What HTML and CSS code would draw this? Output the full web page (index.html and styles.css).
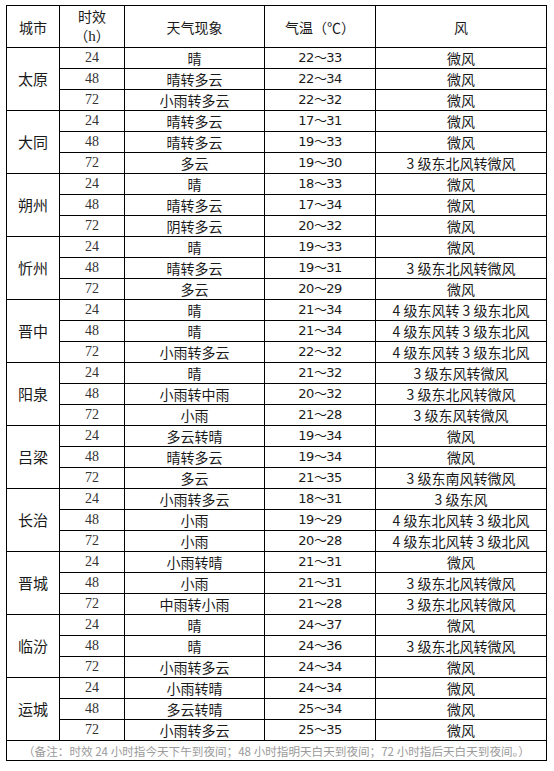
FILE: index.html
```html
<!DOCTYPE html>
<html lang="zh-CN">
<head>
<meta charset="utf-8">
<link rel="stylesheet" href="styles.css">
</head>
<body>
<table class="wx">
<colgroup>
<col class="c-city"><col class="c-h"><col class="c-sky"><col class="c-t"><col class="c-wind">
</colgroup>
<thead>
<tr class="head"><th>城市</th><th class="two">时效<br>（<span class="hh">h</span>）</th><th>天气现象</th><th>气温（℃）</th><th>风</th></tr>
</thead>
<tbody>
<tr><td rowspan="3" class="city">太原</td><td class="n">24</td><td>晴</td><td class="t">22～33</td><td>微风</td></tr>
<tr><td class="n">48</td><td>晴转多云</td><td class="t">22～34</td><td>微风</td></tr>
<tr><td class="n">72</td><td>小雨转多云</td><td class="t">22～32</td><td>微风</td></tr>

<tr><td rowspan="3" class="city">大同</td><td class="n">24</td><td>晴转多云</td><td class="t">17～31</td><td>微风</td></tr>
<tr><td class="n">48</td><td>晴转多云</td><td class="t">19～33</td><td>微风</td></tr>
<tr><td class="n">72</td><td>多云</td><td class="t">19～30</td><td>3 级东北风转微风</td></tr>

<tr><td rowspan="3" class="city">朔州</td><td class="n">24</td><td>晴</td><td class="t">18～33</td><td>微风</td></tr>
<tr><td class="n">48</td><td>晴转多云</td><td class="t">17～34</td><td>微风</td></tr>
<tr><td class="n">72</td><td>阴转多云</td><td class="t">20～32</td><td>微风</td></tr>

<tr><td rowspan="3" class="city">忻州</td><td class="n">24</td><td>晴</td><td class="t">19～33</td><td>微风</td></tr>
<tr><td class="n">48</td><td>晴转多云</td><td class="t">19～31</td><td>3 级东北风转微风</td></tr>
<tr><td class="n">72</td><td>多云</td><td class="t">20～29</td><td>微风</td></tr>

<tr><td rowspan="3" class="city">晋中</td><td class="n">24</td><td>晴</td><td class="t">21～34</td><td>4 级东风转 3 级东北风</td></tr>
<tr><td class="n">48</td><td>晴</td><td class="t">21～34</td><td>4 级东风转 3 级东北风</td></tr>
<tr><td class="n">72</td><td>小雨转多云</td><td class="t">22～32</td><td>4 级东风转 3 级东北风</td></tr>

<tr><td rowspan="3" class="city">阳泉</td><td class="n">24</td><td>晴</td><td class="t">21～32</td><td>3 级东风转微风</td></tr>
<tr><td class="n">48</td><td>小雨转中雨</td><td class="t">20～32</td><td>3 级东北风转微风</td></tr>
<tr><td class="n">72</td><td>小雨</td><td class="t">21～28</td><td>3 级东风转微风</td></tr>

<tr><td rowspan="3" class="city">吕梁</td><td class="n">24</td><td>多云转晴</td><td class="t">19～34</td><td>微风</td></tr>
<tr><td class="n">48</td><td>晴转多云</td><td class="t">19～34</td><td>微风</td></tr>
<tr><td class="n">72</td><td>多云</td><td class="t">21～35</td><td>3 级东南风转微风</td></tr>

<tr><td rowspan="3" class="city">长治</td><td class="n">24</td><td>小雨转多云</td><td class="t">18～31</td><td>3 级东风</td></tr>
<tr><td class="n">48</td><td>小雨</td><td class="t">19～29</td><td>4 级东北风转 3 级北风</td></tr>
<tr><td class="n">72</td><td>小雨</td><td class="t">20～28</td><td>4 级东北风转 3 级北风</td></tr>

<tr><td rowspan="3" class="city">晋城</td><td class="n">24</td><td>小雨转晴</td><td class="t">21～31</td><td>微风</td></tr>
<tr><td class="n">48</td><td>小雨</td><td class="t">21～31</td><td>3 级东北风转微风</td></tr>
<tr><td class="n">72</td><td>中雨转小雨</td><td class="t">21～28</td><td>3 级东北风转微风</td></tr>

<tr><td rowspan="3" class="city">临汾</td><td class="n">24</td><td>晴</td><td class="t">24～37</td><td>微风</td></tr>
<tr><td class="n">48</td><td>晴</td><td class="t">24～36</td><td>3 级东北风转微风</td></tr>
<tr><td class="n">72</td><td>小雨转多云</td><td class="t">24～34</td><td>微风</td></tr>

<tr><td rowspan="3" class="city">运城</td><td class="n">24</td><td>小雨转晴</td><td class="t">24～34</td><td>微风</td></tr>
<tr><td class="n">48</td><td>多云转晴</td><td class="t">25～34</td><td>微风</td></tr>
<tr><td class="n">72</td><td>小雨转多云</td><td class="t">25～35</td><td>微风</td></tr>

<tr class="note"><td colspan="5">（备注：时效 24 小时指今天下午到夜间；48 小时指明天白天到夜间；72 小时指后天白天到夜间。）</td></tr>
</tbody>
</table>
</body>
</html>
```
FILE: styles.css
```css
html, body {
  margin: 0;
  padding: 0;
  background: #ffffff;
}
body {
  padding: 5px 0 0 6px;
  font-family: "Noto Sans CJK SC", "Noto Sans", sans-serif;
  color: #1a1a1a;
}
.wx {
  border-collapse: collapse;
  table-layout: fixed;
  width: 540px;
  font-size: 14px;
}
.c-city { width: 53px; }
.c-h { width: 65px; }
.c-sky { width: 140px; }
.c-t { width: 111px; }
.c-wind { width: 171px; }
.wx th, .wx td {
  border: 1px solid #000;
  padding: 0;
  text-align: center;
  vertical-align: middle;
  font-weight: normal;
  line-height: 18px;
  height: 20px;
  white-space: nowrap;
}
.head th {
  height: 41px;
}
.head .two {
  line-height: 19px;
}
.hh {
  font-family: "Liberation Serif", serif;
  font-size: 15px;
}
.wx td.city {
  font-size: 15px;
}
.wx td.n {
  font-family: "Liberation Serif", serif;
  font-size: 14px;
  color: #333;
}
.wx td.t {
  font-family: "DejaVu Sans", sans-serif;
  font-size: 13px;
  letter-spacing: -0.5px;
}
.note td {
  color: #9a9a9a;
  font-size: 11.6px;
  height: 19px;
}
```
